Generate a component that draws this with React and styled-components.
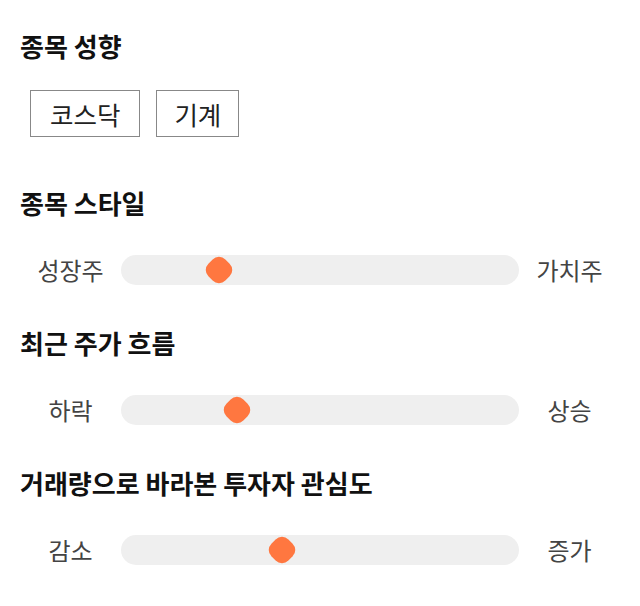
import styled, { createGlobalStyle } from 'styled-components';

const GlobalStyle = createGlobalStyle`
  body {
    margin: 0;
    background: #ffffff;
    font-family: "Noto Sans CJK KR", "Noto Sans", sans-serif;
  }
`;

const Page = styled.div`
  width: 640px;
  padding: 31px 20px 0 20px;
  box-sizing: border-box;
`;

const Section = styled.section`
  margin-bottom: ${(p) => p.$after}px;
`;

const Heading = styled.h2`
  margin: 0 0 ${(p) => p.$gap}px;
  font-size: 26px;
  font-weight: 700;
  line-height: 30px;
  color: #111;
  letter-spacing: 0;
`;

const ChipRow = styled.div`
  display: flex;
  gap: 16px;
  padding-left: 10px;
`;

const Chip = styled.button`
  height: 47px;
  padding: 0 ${(p) => p.$pad}px;
  border: 1px solid #888;
  background: #fff;
  font-family: inherit;
  font-size: 25.5px;
  color: #222;
  line-height: 45px;
  cursor: pointer;
`;

const SliderRow = styled.div`
  display: grid;
  grid-template-columns: 101px 398px 101px;
  align-items: center;
  height: 30px;
`;

const SideLabel = styled.span`
  text-align: center;
  font-size: 24px;
  color: #444;
  line-height: 30px;
  white-space: nowrap;
`;

const Track = styled.div`
  position: relative;
  height: 30px;
  border-radius: 15px;
  background: #efefef;
`;

const Thumb = styled.div`
  position: absolute;
  top: 3px;
  width: 24px;
  height: 24px;
  margin-left: -12px;
  border-radius: 9px;
  background: #ff7740;
  transform: rotate(45deg);
`;

const sliders = [
  { title: '종목 스타일', left: '성장주', right: '가치주', pos: 98 },
  { title: '최근 주가 흐름', left: '하락', right: '상승', pos: 116 },
  { title: '거래량으로 바라본 투자자 관심도', left: '감소', right: '증가', pos: 161 },
];

export default function App() {
  return (
    <Page>
      <GlobalStyle />
      <Section $after={51}>
        <Heading $gap={29}>종목 성향</Heading>
        <ChipRow>
          <Chip $pad={19}>코스닥</Chip>
          <Chip $pad={17}>기계</Chip>
        </ChipRow>
      </Section>
      {sliders.map((s) => (
        <Section key={s.title} $after={43}>
          <Heading $gap={37}>{s.title}</Heading>
          <SliderRow>
            <SideLabel>{s.left}</SideLabel>
            <Track>
              <Thumb style={{ left: s.pos }} />
            </Track>
            <SideLabel>{s.right}</SideLabel>
          </SliderRow>
        </Section>
      ))}
    </Page>
  );
}
